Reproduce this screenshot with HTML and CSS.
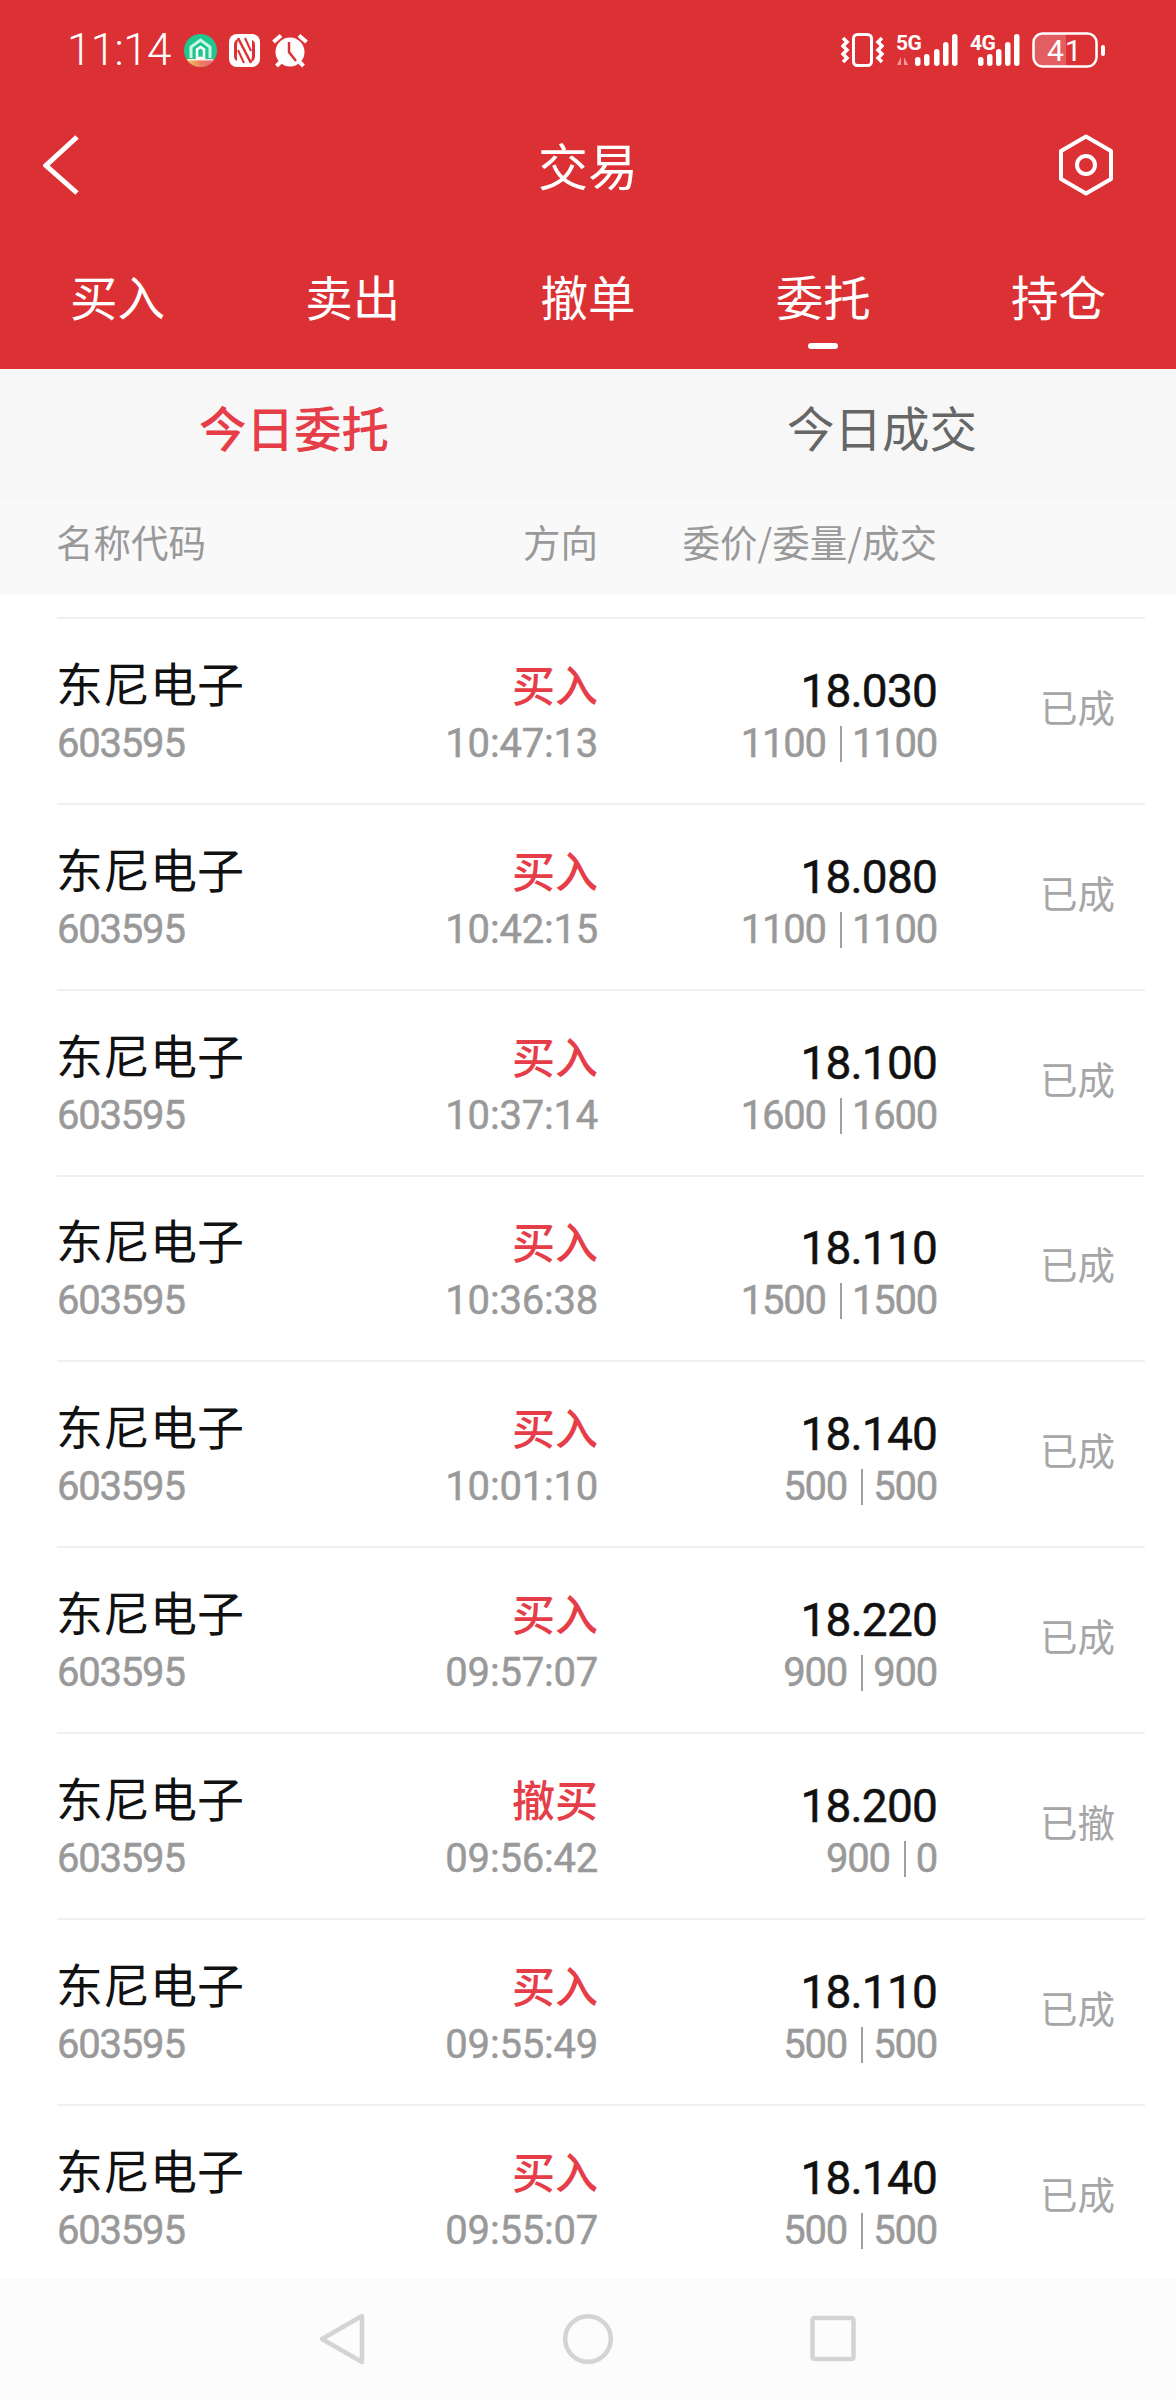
FILE: index.html
```html
<!DOCTYPE html>
<html lang="zh-CN">
<head>
<meta charset="utf-8">
<title>交易</title>
<link rel="stylesheet" href="styles.css">
</head>
<body>
<div class="page">
  <header class="top">
    <div class="status">
      <div class="status-left">
        <span class="clock">11:14</span>
        <svg class="ic-app" width="33" height="33" viewBox="0 0 33 33">
          <defs><linearGradient id="band" x1="0" x2="1" y1="0" y2="0"><stop offset="0" stop-color="#f6d36a"/><stop offset=".5" stop-color="#ef7f5a"/><stop offset="1" stop-color="#e85b8a"/></linearGradient><clipPath id="disc"><circle cx="16.5" cy="16.5" r="16.5"/></clipPath></defs>
          <circle cx="16.5" cy="16.5" r="16.5" fill="#1fc78f"/>
          <g clip-path="url(#disc)"><rect x="0" y="25" width="33" height="8" fill="url(#band)"/><rect x="4" y="25" width="25" height="1.5" fill="#fff" opacity=".8"/></g>
          <path d="M7 24V13L16.500 6 26 13V24" fill="none" stroke="#c9f5e6" stroke-width="3"/>
          <path d="M13 24V15.500L16.500 13 20 15.500V24Z" fill="none" stroke="#fff" stroke-width="2.500"/>
        </svg>
        <svg width="31" height="33" viewBox="0 0 31 33">
          <rect width="31" height="33" rx="8" fill="#fff"/>
          <path d="M9 5Q5 6 5 11V22Q5 26 8 27L8 11Z" fill="#dc3134"/>
          <path d="M22 28Q26 27 26 22V11Q26 7 23 6L23 22Z" fill="#dc3134"/>
          <path d="M9 4L22 29" fill="none" stroke="#dc3134" stroke-width="2.500"/>
          <path d="M9 16L15 29" fill="none" stroke="#dc3134" stroke-width="2"/>
          <path d="M16 4L22 17" fill="none" stroke="#dc3134" stroke-width="2"/>
        </svg>
        <svg width="36" height="35" viewBox="0 0 36 35">
          <circle cx="18" cy="19" r="14.500" fill="#fff"/>
          <path d="M17 9V19L24 28" fill="none" stroke="#dc3134" stroke-width="2.500"/>
          <path d="M1.500 9L9 2.500M34.500 9L27 2.500M4.500 33L9 28.500M31.500 33L27 28.500" fill="none" stroke="#fff" stroke-width="4"/>
        </svg>
      </div>
      <div class="status-right">
        <svg width="43" height="36" viewBox="0 0 43 36">
          <rect x="12.500" y="2.500" width="18" height="31" rx="4" fill="none" stroke="#fff" stroke-width="3"/>
          <path d="M2 6L6 10 2 14 6 18 2 22 6 26 2 30M41 6L37 10 41 14 37 18 41 22 37 26 41 30" fill="none" stroke="#fff" stroke-width="3.500"/>
        </svg>
        <svg width="62" height="40" viewBox="0 -2 62 40">
          <text class="net" x="0" y="18">5G</text>
          <path d="M1 33L5 25V33ZM8 25L12 33H8Z" fill="#f09a9b"/>
          <g fill="#fff"><rect x="19" y="25" width="5.500" height="9" rx="2.750"/><rect x="28" y="22" width="5.500" height="12" rx="2.750"/><rect x="38" y="17" width="5.500" height="17" rx="2.750"/><rect x="47" y="10" width="5.500" height="24" rx="2.750"/><rect x="56" y="2" width="5.500" height="32" rx="2.750"/></g>
        </svg>
        <svg width="50" height="40" viewBox="0 -2 50 40">
          <text class="net" x="0" y="18">4G</text>
          <g fill="#fff"><rect x="8" y="25" width="5.500" height="9" rx="2.750"/><rect x="17" y="22" width="5.500" height="12" rx="2.750"/><rect x="26" y="17" width="5.500" height="17" rx="2.750"/><rect x="35" y="10" width="5.500" height="24" rx="2.750"/><rect x="44" y="2" width="5.500" height="32" rx="2.750"/></g>
        </svg>
        <svg width="73" height="36" viewBox="0 0 73 36">
          <path d="M10 2H34V34H10A8 8 0 0 1 2 26V10A8 8 0 0 1 10 2Z" fill="#fff" opacity=".22"/>
          <rect x="1.500" y="1.500" width="63" height="33" rx="9" fill="none" stroke="#fff" stroke-width="2.500"/>
          <rect x="69" y="13" width="4" height="11" rx="2" fill="#fff"/>
          <text class="batt" x="15" y="29">41</text>
        </svg>
      </div>
    </div>
    <div class="bar">
      <svg width="36" height="60" viewBox="0 0 36 60"><path d="M34 2L3 30.500 34 58" fill="none" stroke="#fff" stroke-width="5"/></svg>
      <h1 class="title">交易</h1>
      <svg class="gear" width="56" height="62" viewBox="0 0 56 62"><path d="M28 2.500L53 17V45L28 59.500 3 45V17Z" fill="none" stroke="#fff" stroke-width="4" stroke-linejoin="round"/><circle cx="28" cy="31" r="9" fill="none" stroke="#fff" stroke-width="4"/></svg>
    </div>
    <nav class="tabs">
      <div class="tab">买入</div>
      <div class="tab">卖出</div>
      <div class="tab">撤单</div>
      <div class="tab tab-on">委托</div>
      <div class="tab">持仓</div>
    </nav>
  </header>

  <div class="subtabs">
    <div class="subtab subtab-on">今日委托</div>
    <div class="subtab">今日成交</div>
  </div>

  <div class="thead">
    <span>名称代码</span>
    <span class="r">方向</span>
    <span class="r">委价/委量/成交</span>
  </div>

  <main class="list">
    <div class="row"><div class="c"><div class="name">东尼电子</div><div class="sub">603595</div></div><div class="c r"><div class="dir">买入</div><div class="sub time">10:47:13</div></div><div class="c r pc"><div class="price">18.030</div><div class="sub">1100<i class="sep"></i>1100</div></div><div class="state">已成</div></div>
    <div class="row"><div class="c"><div class="name">东尼电子</div><div class="sub">603595</div></div><div class="c r"><div class="dir">买入</div><div class="sub time">10:42:15</div></div><div class="c r pc"><div class="price">18.080</div><div class="sub">1100<i class="sep"></i>1100</div></div><div class="state">已成</div></div>
    <div class="row"><div class="c"><div class="name">东尼电子</div><div class="sub">603595</div></div><div class="c r"><div class="dir">买入</div><div class="sub time">10:37:14</div></div><div class="c r pc"><div class="price">18.100</div><div class="sub">1600<i class="sep"></i>1600</div></div><div class="state">已成</div></div>
    <div class="row"><div class="c"><div class="name">东尼电子</div><div class="sub">603595</div></div><div class="c r"><div class="dir">买入</div><div class="sub time">10:36:38</div></div><div class="c r pc"><div class="price">18.110</div><div class="sub">1500<i class="sep"></i>1500</div></div><div class="state">已成</div></div>
    <div class="row"><div class="c"><div class="name">东尼电子</div><div class="sub">603595</div></div><div class="c r"><div class="dir">买入</div><div class="sub time">10:01:10</div></div><div class="c r pc"><div class="price">18.140</div><div class="sub">500<i class="sep"></i>500</div></div><div class="state">已成</div></div>
    <div class="row"><div class="c"><div class="name">东尼电子</div><div class="sub">603595</div></div><div class="c r"><div class="dir">买入</div><div class="sub time">09:57:07</div></div><div class="c r pc"><div class="price">18.220</div><div class="sub">900<i class="sep"></i>900</div></div><div class="state">已成</div></div>
    <div class="row"><div class="c"><div class="name">东尼电子</div><div class="sub">603595</div></div><div class="c r"><div class="dir">撤买</div><div class="sub time">09:56:42</div></div><div class="c r pc"><div class="price">18.200</div><div class="sub">900<i class="sep"></i>0</div></div><div class="state">已撤</div></div>
    <div class="row"><div class="c"><div class="name">东尼电子</div><div class="sub">603595</div></div><div class="c r"><div class="dir">买入</div><div class="sub time">09:55:49</div></div><div class="c r pc"><div class="price">18.110</div><div class="sub">500<i class="sep"></i>500</div></div><div class="state">已成</div></div>
    <div class="row"><div class="c"><div class="name">东尼电子</div><div class="sub">603595</div></div><div class="c r"><div class="dir">买入</div><div class="sub time">09:55:07</div></div><div class="c r pc"><div class="price">18.140</div><div class="sub">500<i class="sep"></i>500</div></div><div class="state">已成</div></div>
  </main>

  <footer class="sysnav">
    <svg width="50" height="52" viewBox="0 0 50 52"><path d="M44 3V49L4 26Z" fill="none" stroke="#d4d4d4" stroke-width="4.500" stroke-linejoin="round"/></svg>
    <svg width="50" height="52" viewBox="0 0 50 52"><circle cx="25" cy="26" r="22.800" fill="none" stroke="#d4d4d4" stroke-width="4.500"/></svg>
    <svg width="50" height="52" viewBox="0 0 50 52"><rect x="4.500" y="5" width="41" height="41" rx="2" fill="none" stroke="#d4d4d4" stroke-width="4.500"/></svg>
  </footer>
</div>
</body>
</html>
```
FILE: styles.css
```css
* { box-sizing: border-box; }
html, body { margin: 0; padding: 0; background: #fff; }
body { font-family: "Noto Sans CJK SC", "Noto Sans", sans-serif; }

.page {
  width: 1176px;
  height: 2400px;
  display: flex;
  flex-direction: column;
  overflow: hidden;
}

.top { background: #dc3134; color: #fff; flex: none; }

.status {
  height: 98px;
  display: flex;
  align-items: center;
  justify-content: space-between;
  padding: 2px 71px 0 67px;
}
.status-left, .status-right { display: flex; align-items: center; }
.status-left { gap: 12px; }
.status-right { gap: 12px; }
.clock {
  font-family: Roboto, sans-serif;
  font-weight: 300;
  font-size: 44px;
  letter-spacing: -0.6px;
  line-height: 50px;
  margin-right: 5px;
  width: 100px;
  white-space: nowrap;
}
.net { font-family: Roboto, sans-serif; font-weight: 700; font-size: 21px; fill: #fff; letter-spacing: -0.5px; }
.batt { font-family: Roboto, sans-serif; font-weight: 400; font-size: 30px; fill: #fff; letter-spacing: 1px; }

.bar {
  height: 134px;
  display: grid;
  grid-template-columns: 1fr auto 1fr;
  align-items: center;
  padding: 0 43px;
}
.gear { justify-self: end; margin-right: 19px; }
.title { margin: 0 0 3px; font-size: 50px; font-weight: 400; line-height: 60px; }

.tabs {
  height: 137px;
  display: grid;
  grid-template-columns: repeat(5, 1fr);
  padding-top: 34px;
}
.tab { text-align: center; font-size: 47.5px; line-height: 60px; }
.tab-on { display: flex; flex-direction: column; align-items: center; gap: 17px; }
.tab-on::after { content: ""; width: 30px; height: 6px; border-radius: 3px; background: #fff; }

.subtabs {
  flex: none;
  height: 130px;
  background: #f7f7f7;
  display: grid;
  grid-template-columns: 1fr 1fr;
  align-items: center;
  text-align: center;
  font-size: 47.5px;
  line-height: 60px;
  color: #666;
  padding-bottom: 14px;
}
.subtab-on { color: #e63e49; font-weight: 500; }

.thead {
  flex: none;
  height: 95px;
  background: #f9f9f9;
  color: #999;
  font-size: 37.5px;
  display: grid;
  grid-template-columns: 301px 241px 339px;
  align-items: center;
  padding-left: 56px;
  padding-bottom: 12px;
}
.r { text-align: right; white-space: nowrap; }

.list {
  flex: 1;
  min-height: 0;
  overflow: hidden;
  margin: 23px 31px 0 57px;
}
.row {
  height: 185.85px;
  border-top: 2px solid #f0f0f0;
  display: grid;
  grid-template-columns: 300px 241px 339px 178px;
  align-items: center;
}
.c { display: flex; flex-direction: column; gap: 9px; padding-top: 1px; }
.c.r { gap: 8px; }
.name { font-size: 47px; line-height: 56px; color: #111; margin-left: -1px; }
.dir { font-size: 43px; line-height: 56px; color: #e63e49; font-weight: 500; margin-top: 1px; }
.c.r.pc { gap: 0; padding-top: 10px; }
.price {
  font-family: Roboto, sans-serif;
  font-size: 46px;
  line-height: 56px;
  color: #111;
  letter-spacing: -0.8px;
  -webkit-text-stroke: 0.5px #111;
}
.sub {
  font-family: Roboto, sans-serif;
  font-size: 40px;
  line-height: 50px;
  color: #999;
  letter-spacing: -1.2px;
  -webkit-text-stroke: 0.5px #999;
  display: flex;
  align-items: center;
}
.time { letter-spacing: -0.2px; }
.c.r .sub { justify-content: flex-end; }
.sep { display: block; width: 2px; height: 36px; background: #a0a0a0; margin: 0 10px 0 14px; }
.state { font-size: 37.5px; color: #a6a6a6; text-align: right; padding-bottom: 11px; }

.sysnav {
  flex: none;
  height: 122px;
  background: #fcfcfc;
  display: grid;
  grid-template-columns: repeat(3, 245px);
  justify-content: center;
  justify-items: center;
  align-items: center;
}
```
